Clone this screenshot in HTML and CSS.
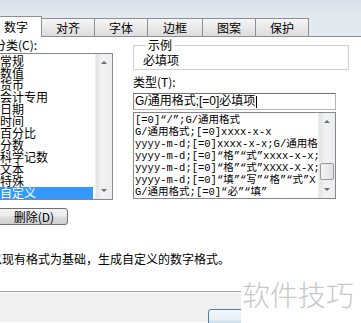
FILE: index.html
```html
<!DOCTYPE html>
<html lang="zh-CN">
<head>
<meta charset="utf-8">
<title>设置单元格格式</title>
<link rel="stylesheet" href="styles.css">
</head>
<body>
<div class="win">
  <div class="band"></div>
  <div class="tabs">
    <div class="tab active">数字</div>
    <div class="tab">对齐</div>
    <div class="tab">字体</div>
    <div class="tab wide">边框</div>
    <div class="tab">图案</div>
    <div class="tab">保护</div>
  </div>
  <div class="panel">
    <div class="cols">
      <div class="left">
        <div class="lbl cut">分类(C):</div>
        <div class="listbox cats">
          <div class="items">
            <div class="item">常规</div>
            <div class="item">数值</div>
            <div class="item">货币</div>
            <div class="item">会计专用</div>
            <div class="item">日期</div>
            <div class="item">时间</div>
            <div class="item">百分比</div>
            <div class="item">分数</div>
            <div class="item">科学记数</div>
            <div class="item">文本</div>
            <div class="item">特殊</div>
            <div class="item sel">自定义</div>
          </div>
          <div class="vscroll">
            <div class="sbtn"><span class="arr up"></span></div>
            <div class="track"></div>
            <div class="sbtn"><span class="arr down"></span></div>
          </div>
        </div>
        <button class="btn del">删除(D)</button>
      </div>
      <div class="right">
        <fieldset class="sample">
          <legend>示例</legend>
          <div class="sample-val">必填项</div>
        </fieldset>
        <div class="lbl type-lbl">类型(T):</div>
        <div class="input">G/通用格式;[=0]必填项<span class="caret"></span></div>
        <div class="listbox types">
          <div class="items mono">
            <div class="line">[=0]“/”;G/通用格式</div>
            <div class="line">G/通用格式;[=0]xxxx-x-x</div>
            <div class="line">yyyy-m-d;[=0]xxxx-x-x;G/通用格</div>
            <div class="line">yyyy-m-d;[=0]“格”“式”xxxx-x-x;</div>
            <div class="line">yyyy-m-d;[=0]“格”“式”XXXX-X-X;</div>
            <div class="line">yyyy-m-d;[=0]“填”“写”“格”“式”X</div>
            <div class="line">G/通用格式;[=0]“必”“填”</div>
          </div>
          <div class="vscroll">
            <div class="sbtn"><span class="arr up"></span></div>
            <div class="track t2"><div class="thumb"></div></div>
            <div class="sbtn"><span class="arr down"></span></div>
          </div>
        </div>
      </div>
    </div>
    <div class="desc">以现有格式为基础，生成自定义的数字格式。</div>
  </div>
  <div class="footer">
    <button class="btn ok">确定</button>
  </div>
  <div class="watermark">软件技巧</div>
</div>
</body>
</html>
```

FILE: styles.css
```css
* { box-sizing: border-box; }
html, body { margin: 0; padding: 0; }
body {
  font-family: "Noto Sans CJK SC", "Liberation Sans", sans-serif;
  font-size: 12px;
  color: #000;
  background: #fff;
}
.win {
  width: 361px;
  height: 323px;
  overflow: hidden;
  position: relative;
  background: #fff;
}
.band {
  height: 16px;
  background: linear-gradient(#d8e0e9, #e4e9ef);
}
.tabs {
  height: 20px;
  display: flex;
  align-items: flex-end;
  background: #e4e9ef;
}
.tab {
  height: 18px;
  width: 54px;
  flex: none;
  border: 1px solid #8e8f8f;
  border-bottom: none;
  margin-left: -1px;
  background: linear-gradient(#f6f6f6, #dcdcdc);
  display: flex;
  align-items: center;
  justify-content: center;
  line-height: 14px;
  padding-top: 1px;
}
.tab.wide { width: 56px; }
.tab.active {
  height: 21px;
  width: 52px;
  margin-left: -10px;
  margin-bottom: -1px;
  background: #fff;
  position: relative;
  z-index: 1;
  padding-top: 0;
}
.panel {
  border-top: 1px solid #8e8f8f;
  height: 255px;
  background: #fff;
}
.cols { display: flex; }
.left {
  width: 117px;
  margin-left: -4px;
  flex: none;
  padding-top: 1px;
}
.lbl { line-height: 14px; height: 14px; }
.lbl.cut { margin-left: -2px; }
.listbox {
  display: flex;
  border: 1px solid #828790;
  background: #fff;
  margin-top: 1px;
}
.cats { height: 147px; }
.items {
  flex: 1;
  padding-top: 1px;
  overflow: hidden;
  min-width: 0;
}
.item {
  height: 12px;
  line-height: 12px;
  padding-left: 3px;
  white-space: nowrap;
}
.item.sel {
  background: #3399ff;
  color: #fff;
  margin-right: 2px;
}
.vscroll {
  width: 17px;
  flex: none;
  display: flex;
  flex-direction: column;
  background: linear-gradient(90deg, #e3e3e3, #f2f2f2 40%, #ececec);
  border-left: 1px solid #efefef;
}
.sbtn {
  height: 17px;
  flex: none;
  display: flex;
  align-items: center;
  justify-content: center;
}
.track { flex: 1; }
.arr { width: 0; height: 0; border-left: 3px solid transparent; border-right: 3px solid transparent; }
.arr.up { border-bottom: 3px solid #6b6b6b; }
.arr.down { border-top: 3px solid #6b6b6b; }
.t2 { display: flex; flex-direction: column; justify-content: flex-end; padding-bottom: 1px; }
.thumb {
  height: 17px;
  margin: 0 1px;
  border: 1px solid #9a9a9a;
  border-radius: 2px;
  background: linear-gradient(90deg, #f4f4f4, #e2e2e2);
}
.btn {
  font-family: "Noto Sans CJK SC", "Liberation Sans", sans-serif;
  font-size: 12px;
  line-height: 14px;
  color: #000;
  border: 1px solid #707070;
  border-radius: 3px;
  background: linear-gradient(#f3f3f3 0%, #ebebeb 48%, #dddddd 52%, #cfcfcf 100%);
  padding: 0;
  display: block;
}
.del {
  margin-top: 8px;
  width: 72px;
  height: 17px;
  padding-left: 4px;
}
.right {
  margin-left: 20px;
  width: 216px;
  flex: none;
  padding-top: 2px;
}
.sample {
  margin: 0;
  padding: 2px 0 2px 9px;
  min-width: 0;
  border: 1px solid #d0d0d0;
  width: 216px;
}
.sample legend {
  padding: 0 2px;
  margin-left: 3px;
  line-height: 12px;
  height: 12px;
}
.sample-val { line-height: 14px; height: 14px; }
.type-lbl { margin-top: 5px; }
.input {
  margin-top: 4px;
  width: 203px;
  height: 17px;
  border: 1px solid #8b8b8b;
  border-color: #6f6f6f #b5b5b5 #b5b5b5 #8b8b8b;
  padding-left: 1px;
  line-height: 15px;
  font-family: "Liberation Sans", "Noto Sans CJK SC", sans-serif;
  white-space: nowrap;
  display: flex;
  align-items: center;
}
.caret {
  display: inline-block;
  width: 1px;
  height: 12px;
  background: #000;
  margin-left: 1px;
}
.types {
  margin-top: 2px;
  width: 203px;
  height: 87px;
}
.mono {
  font-family: "Liberation Mono", "Noto Sans CJK SC", monospace;
  font-size: 10.5px;
}
.line {
  height: 12px;
  line-height: 12px;
  padding-left: 1px;
  white-space: nowrap;
  overflow: hidden;
}
.desc {
  margin-top: 27px;
  margin-left: -10px;
  line-height: 14px;
  white-space: nowrap;
}
.footer {
  border-top: 1px solid #a0a0a0;
  box-shadow: inset 0 1px 0 #ffffff;
  background: #f0f0f0;
  height: 31px;
  padding-top: 17px;
  padding-left: 208px;
}
.ok {
  width: 75px;
  height: 23px;
  text-align: center;
  padding-left: 20px;
  border-color: #4f7ea3;
  background: linear-gradient(#f2f7fa 0%, #e6eef4 48%, #d3e1eb 52%, #c6d7e3 100%);
}
.watermark {
  position: absolute;
  right: 0;
  top: 268px;
  width: 120px;
  height: 55px;
  background: #fff;
  color: #c8c8c8;
  font-size: 28px;
  line-height: 36px;
  padding-top: 8px;
  padding-left: 1px;
  white-space: nowrap;
  font-weight: 300;
}
```
